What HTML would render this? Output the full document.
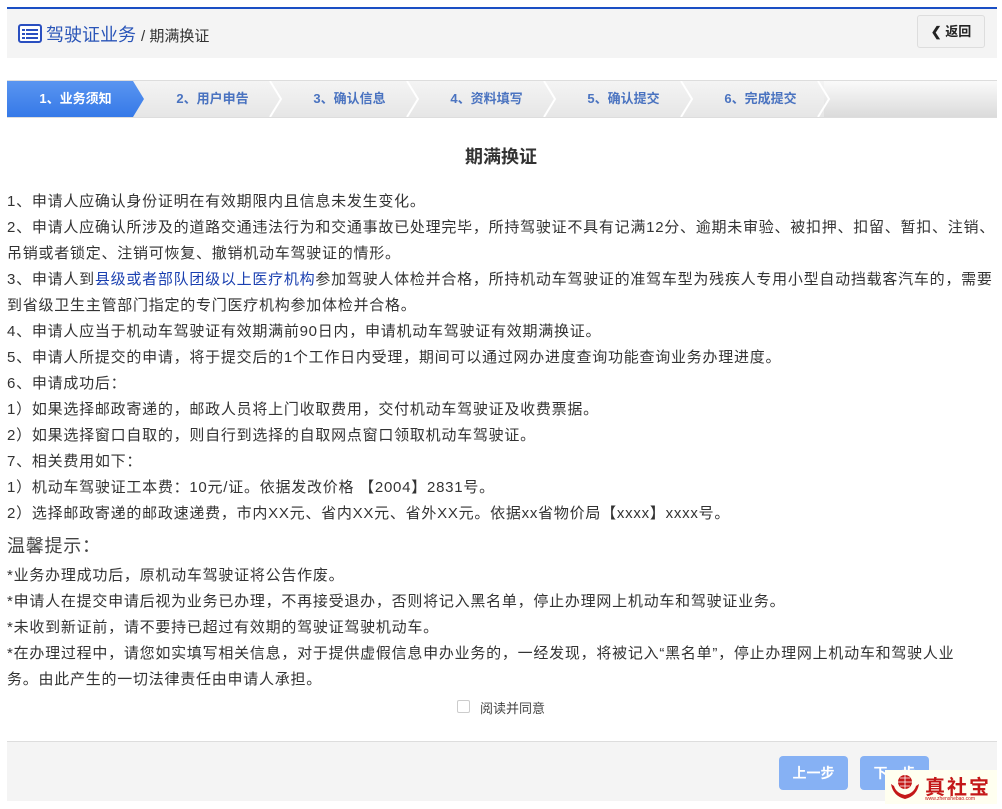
<!DOCTYPE html>
<html><head><meta charset="utf-8"><style>
*{margin:0;padding:0;box-sizing:border-box}
body{width:1002px;height:809px;background:#fff;font-family:"Liberation Sans","Noto Sans CJK SC",sans-serif;color:#333;position:relative;overflow:hidden}
.top{position:absolute;left:7px;top:7px;width:990px;height:2px;background:#1a4fc4}
.hdr{position:absolute;left:7px;top:9px;width:990px;height:49px;background:#f4f4f4}
.hdr .t{position:absolute;left:11px;top:12px;font-size:18px;color:#2a55b8;white-space:nowrap}
.hdr .t span{font-size:15px;color:#333}
.back{position:absolute;right:12px;top:6px;width:68px;height:33px;border:1px solid #ddd;border-radius:3px;background:#f2f2f2;font-size:13px;font-weight:bold;text-align:center;line-height:31px;color:#222}
.steps{position:absolute;left:7px;top:80px;width:990px;height:38px;background:linear-gradient(#f4f4f4,#e6e6e6);border-top:1px solid #ddd;border-bottom:1px solid #ddd;overflow:hidden}
.endgrad{position:absolute;left:817px;top:0;width:173px;height:38px;background:linear-gradient(#fafafa,#d9d9d9)}
.st{position:absolute;top:0;height:36px;line-height:36px;font-size:13px;font-weight:bold;color:#4a73c0;text-align:center;width:137px}
.st.a{background:linear-gradient(#5a95f0,#3579e8);color:#fff;clip-path:polygon(0 0,126px 0,137px 18px,126px 36px,0 36px)}
h1{position:absolute;top:143px;left:0;width:1002px;text-align:center;font-size:18px;font-weight:bold;color:#333}
.body{position:absolute;left:7px;top:189px;font-size:15px;line-height:26px;white-space:nowrap;letter-spacing:0.75px}
.b{color:#1a3fb0}
.tip{font-size:18px;line-height:30px;color:#444;margin-top:4px;margin-bottom:2px}
.chk{position:absolute;left:457px;top:700px;width:13px;height:13px;border:1px solid #ccc;border-radius:2px}
.chkt{position:absolute;left:480px;top:698px;font-size:13px;color:#444}
.ft{position:absolute;left:7px;top:741px;width:990px;height:60px;background:#f4f4f4;border-top:1px solid #ddd}
.btn{position:absolute;top:14px;width:69px;height:34px;border-radius:4px;background:#86b1f4;color:#fff;font-size:14px;font-weight:bold;text-align:center;line-height:34px}
.logo{position:absolute;left:885px;top:770px;width:112px;height:34px;background:#fffff0}
.logo .z{position:absolute;left:40px;top:1px;font-size:20px;font-weight:bold;color:#c41818;letter-spacing:2px}
.logo .u{position:absolute;left:40px;top:26px;font-size:5px;color:#c41818}
</style></head><body>
<div class="top"></div>
<div class="hdr">
<div class="t"><svg width="24" height="19" viewBox="0 0 24 19" style="vertical-align:-2px;margin-right:4px"><rect x="1" y="1" width="22" height="17" rx="2" fill="#fff" stroke="#2a4fc0" stroke-width="2"/><rect x="4" y="5" width="3" height="2" fill="#2a4fc0"/><rect x="8" y="5" width="12" height="2" fill="#2a4fc0"/><rect x="4" y="9" width="3" height="2" fill="#2a4fc0"/><rect x="8" y="9" width="12" height="2" fill="#2a4fc0"/><rect x="4" y="13" width="3" height="2" fill="#2a4fc0"/><rect x="8" y="13" width="12" height="2" fill="#2a4fc0"/></svg>驾驶证业务 <span>/ 期满换证</span></div>
<div class="back">❮ 返回</div>
</div>
<div class="steps">
<div class="endgrad"></div>
<div class="st a" style="left:0">1、业务须知</div>
<div class="st" style="left:137px">2、用户申告</div>
<div class="st" style="left:274px">3、确认信息</div>
<div class="st" style="left:411px">4、资料填写</div>
<div class="st" style="left:548px">5、确认提交</div>
<div class="st" style="left:685px">6、完成提交</div>
<svg style="position:absolute;left:0;top:0" width="990" height="36"><g stroke="#fff" stroke-width="2" fill="none"><path d="M263 0 L274 18 L263 36"/><path d="M400 0 L411 18 L400 36"/><path d="M537 0 L548 18 L537 36"/><path d="M674 0 L685 18 L674 36"/><path d="M811 0 L822 18 L811 36"/></g></svg>
</div>
<h1>期满换证</h1>
<div class="body">
1、申请人应确认身份证明在有效期限内且信息未发生变化。<br>
2、申请人应确认所涉及的道路交通违法行为和交通事故已处理完毕，所持驾驶证不具有记满12分、逾期未审验、被扣押、扣留、暂扣、注销、<br>
吊销或者锁定、注销可恢复、撤销机动车驾驶证的情形。<br>
3、申请人到<span class="b">县级或者部队团级以上医疗机构</span>参加驾驶人体检并合格，所持机动车驾驶证的准驾车型为残疾人专用小型自动挡载客汽车的，需要<br>
到省级卫生主管部门指定的专门医疗机构参加体检并合格。<br>
4、申请人应当于机动车驾驶证有效期满前90日内，申请机动车驾驶证有效期满换证。<br>
5、申请人所提交的申请，将于提交后的1个工作日内受理，期间可以通过网办进度查询功能查询业务办理进度。<br>
6、申请成功后：<br>
1）如果选择邮政寄递的，邮政人员将上门收取费用，交付机动车驾驶证及收费票据。<br>
2）如果选择窗口自取的，则自行到选择的自取网点窗口领取机动车驾驶证。<br>
7、相关费用如下：<br>
1）机动车驾驶证工本费：10元/证。依据发改价格 【2004】2831号。<br>
2）选择邮政寄递的邮政速递费，市内XX元、省内XX元、省外XX元。依据xx省物价局【xxxx】xxxx号。<br>
<div class="tip">温馨提示：</div>
*业务办理成功后，原机动车驾驶证将公告作废。<br>
*申请人在提交申请后视为业务已办理，不再接受退办，否则将记入黑名单，停止办理网上机动车和驾驶证业务。<br>
*未收到新证前，请不要持已超过有效期的驾驶证驾驶机动车。<br>
*在办理过程中，请您如实填写相关信息，对于提供虚假信息申办业务的，一经发现，将被记入“黑名单”，停止办理网上机动车和驾驶人业<br>
务。由此产生的一切法律责任由申请人承担。
</div>
<div class="chk"></div><div class="chkt">阅读并同意</div>
<div class="ft">
<div class="btn" style="left:772px">上一步</div>
<div class="btn" style="left:853px">下一步</div>
</div>
<div class="logo">
<svg style="position:absolute;left:4px;top:2px" width="32" height="30" viewBox="0 0 32 30"><circle cx="16" cy="10" r="7" fill="#c41818"/><path d="M9 10h14M16 3v14M11 6h10M11 14h10" stroke="#fff" stroke-width="0.8"/><path d="M2 12 Q4 24 16 27 Q28 24 30 12 L27 14 Q25 21 16 23 Q7 21 5 14Z" fill="#c41818"/></svg>
<div class="z">真社宝</div>
<div class="u">www.zhenshebao.com</div>
</div>
</body></html>
